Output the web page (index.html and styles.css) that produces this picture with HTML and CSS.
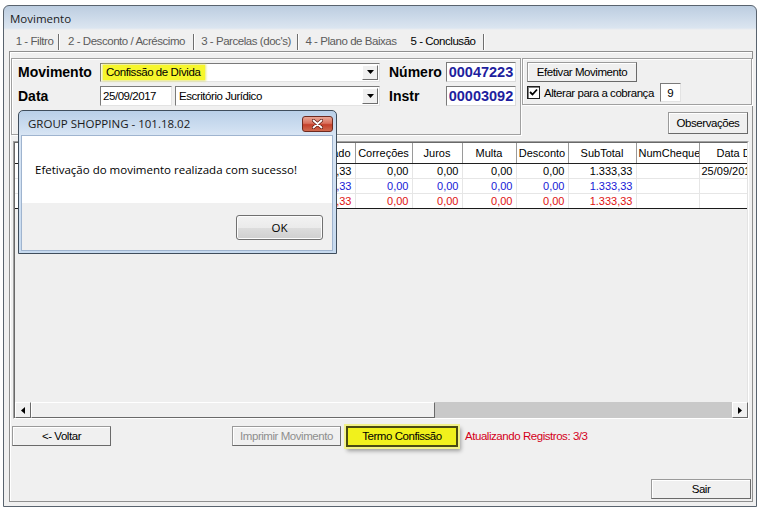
FILE: index.html
```html
<!DOCTYPE html>
<html lang="pt-BR">
<head>
<meta charset="utf-8">
<title>Movimento</title>
<link rel="stylesheet" href="styles.css">
</head>
<body>
<div class="window">
  <div class="titlebar">Movimento</div>
  <div class="tabs">
    <div class="tab t1">1 - Filtro</div><span class="sep"></span>
    <div class="tab t2">2 - Desconto / Acréscimo</div><span class="sep"></span>
    <div class="tab t3">3 - Parcelas (doc's)</div><span class="sep"></span>
    <div class="tab t4">4 - Plano de Baixas</div>
    <div class="tab t5 active">5 - Conclusão</div><span class="sep"></span>
  </div>
  <div class="page">
    <div class="top">
      <div class="group form">
        <span class="lbl">Movimento</span>
        <div class="combo">
          <span class="combo-val"><span class="hl">Confissão de Dívida</span></span>
          <span class="drop"><svg width="7" height="4" viewBox="0 0 7 4"><path d="M0 0h7L3.5 4z" fill="#000"/></svg></span>
        </div>
        <span class="lbl lbl-r">Número</span>
        <div class="numbox">00047223</div>

        <span class="lbl">Data</span>
        <div class="pair">
          <div class="edit date">25/09/2017</div>
          <div class="combo combo-small">
            <span class="combo-val">Escritório Jurídico</span>
            <span class="drop"><svg width="7" height="4" viewBox="0 0 7 4"><path d="M0 0h7L3.5 4z" fill="#000"/></svg></span>
          </div>
        </div>
        <span class="lbl lbl-r">Instr</span>
        <div class="numbox">00003092</div>
      </div>
      <div class="side">
        <div class="group actions">
          <button class="btn btn-efetivar">Efetivar Movimento</button>
          <div class="check-row">
            <span class="checkbox"><svg width="9" height="9" viewBox="0 0 9 9"><path d="M1 4l2.5 2.5L8 1.5" fill="none" stroke="#000" stroke-width="1.8"/></svg></span>
            <span class="check-label">Alterar para a cobrança</span>
            <span class="edit edit-small">9</span>
          </div>
        </div>
        <button class="btn btn-obs">Observações</button>
      </div>
    </div>

    <div class="grid">
      <div class="grid-body">
        <table class="data">
          <colgroup>
            <col class="c-doc"><col class="c-venc"><col class="c-parc"><col class="c-valor"><col class="c-atual">
            <col class="c-corr"><col class="c-juros"><col class="c-multa"><col class="c-desc"><col class="c-sub">
            <col class="c-cheque"><col class="c-data">
          </colgroup>
          <thead>
            <tr>
              <th>Documento</th><th>Vencimento</th><th>Parcela</th><th>Valor</th><th class="r">Atualizado</th>
              <th>Correções</th><th>Juros</th><th>Multa</th><th>Desconto</th><th>SubTotal</th><th>NumCheque</th><th class="l">Data Depósito</th>
            </tr>
          </thead>
          <tbody>
            <tr>
              <td></td><td></td><td></td><td></td><td>1.333,33</td>
              <td>0,00</td><td>0,00</td><td>0,00</td><td>0,00</td><td>1.333,33</td><td></td><td class="l">25/09/2017</td>
            </tr>
            <tr class="blue">
              <td></td><td></td><td></td><td></td><td>1.333,33</td>
              <td>0,00</td><td>0,00</td><td>0,00</td><td>0,00</td><td>1.333,33</td><td></td><td></td>
            </tr>
            <tr class="red">
              <td></td><td></td><td></td><td></td><td>1.333,33</td>
              <td>0,00</td><td>0,00</td><td>0,00</td><td>0,00</td><td>1.333,33</td><td></td><td></td>
            </tr>
          </tbody>
        </table>
      </div>
      <div class="hscroll">
        <span class="sb-btn"><svg width="4" height="7" viewBox="0 0 4 7"><path d="M4 0v7L0 3.5z" fill="#000"/></svg></span>
        <span class="sb-thumb"></span>
        <span class="sb-track"></span>
        <span class="sb-btn"><svg width="4" height="7" viewBox="0 0 4 7"><path d="M0 0v7l4-3.5z" fill="#000"/></svg></span>
      </div>
    </div>

    <div class="bottom-row">
      <button class="btn btn-voltar">&lt;- Voltar</button>
      <button class="btn btn-print" disabled>Imprimir Movimento</button>
      <button class="btn btn-termo">Termo Confissão</button>
      <span class="status">Atualizando Registros: 3/3</span>
    </div>

    <div class="footer">
      <button class="btn btn-sair">Sair</button>
    </div>
  </div>
</div>

<div class="dialog">
  <div class="dlg-title">
    <span>GROUP SHOPPING - 101.18.02</span>
    <span class="dlg-close"><svg width="11" height="10" viewBox="0 0 11 10"><path d="M1.5 1.5l8 7M9.5 1.5l-8 7" stroke="#5a1a10" stroke-width="3.2" stroke-linecap="round"/><path d="M1.5 1.5l8 7M9.5 1.5l-8 7" stroke="#fff" stroke-width="1.8" stroke-linecap="round"/></svg></span>
  </div>
  <div class="dlg-content">
    <div class="dlg-body">Efetivação do movimento realizada com sucesso!</div>
    <div class="dlg-footer"><button class="dlg-ok">OK</button></div>
  </div>
</div>
</body>
</html>
```

FILE: styles.css
```css
* { box-sizing: border-box; }

html, body {
  margin: 0;
  padding: 0;
  background: #fff;
}

body {
  width: 760px;
  height: 510px;
  position: relative;
  overflow: hidden;
  font-family: "Liberation Sans", Arial, sans-serif;
  font-size: 11.5px;
  letter-spacing: -0.45px;
  color: #000;
}

button {
  font: inherit;
  letter-spacing: inherit;
  color: inherit;
  margin: 0;
  padding: 0;
}

/* ---------- main window ---------- */
.window {
  margin: 5px 0 0 3px;
  width: 754px;
  height: 502px;
  border: 1px solid #59636e;
  border-radius: 6px 6px 0 0;
  background: linear-gradient(#bccde0 0, #cad8e8 10px, #dbe5f0 22px, #f0f0f0 24px);
  padding: 0 3px 4px 5px;
  display: flex;
  flex-direction: column;
}

.titlebar {
  height: 24px;
  padding: 5px 0 0 1px;
  font-family: "Open Sans", "Noto Sans", sans-serif;
  font-size: 11.5px;
  letter-spacing: 0;
  line-height: 16px;
  color: #1b1b1b;
}

/* ---------- tabs ---------- */
.tabs {
  height: 21px;
  display: flex;
  align-items: center;
  padding-left: 2px;
}

.tab {
  height: 21px;
  padding-top: 2px;
  line-height: 19px;
  text-align: center;
  color: #5c5c5c;
  white-space: nowrap;
}

.tab.active { color: #000; }

.t1 { width: 47px; }
.t2 { width: 133px; }
.t3 { width: 102px; }
.t4 { width: 104px; }
.t5 { width: 80px; }

.sep {
  width: 2px;
  height: 16px;
  margin-top: 2px;
  border-left: 1px solid #6e6e6e;
  border-right: 1px solid #fff;
}

/* ---------- tab page ---------- */
.page {
  flex: 1;
  border: 1px solid #8f8f8f;
  box-shadow: inset 1px 1px 0 #fff;
  display: flex;
  flex-direction: column;
  padding: 0 0 1px 0;
}

.top {
  display: flex;
  gap: 1px;
  margin: 6px 0 0 1px;
}

.group {
  border: 1px solid #a0a0a0;
  box-shadow: inset 1px 1px 0 #fff, 1px 1px 0 #fff;
}

.form {
  width: 510px;
  height: 77px;
  padding: 3px 3px 0 6px;
  display: grid;
  grid-template-columns: 82px 280px 66px 70px;
  grid-template-rows: 20px 20px;
  row-gap: 4px;
  align-items: center;
}

.lbl {
  font-family: "Liberation Sans", Arial, sans-serif;
  font-weight: bold;
  font-size: 14px;
  letter-spacing: 0;
}

.lbl-r { padding-left: 9px; }

.combo {
  height: 19px;
  display: flex;
  align-items: stretch;
  background: #fff;
  border: 1px solid;
  border-color: #7a7a7a #e3e3e3 #e3e3e3 #7a7a7a;
  padding: 1px;
}

.combo-val {
  flex: 1;
  display: flex;
  align-items: center;
  padding-left: 2px;
  white-space: nowrap;
}

.hl {
  background: #f6f62c;
  padding: 0 5px 0 3px;
  margin-left: -1px;
  line-height: 15px;
  box-shadow: 0 0 2px 1px rgba(228, 228, 90, 0.85);
}

.drop {
  width: 16px;
  display: flex;
  align-items: center;
  justify-content: center;
  background: #f0f0f0;
  border: 1px solid;
  border-color: #fff #6e6e6e #6e6e6e #fff;
}

.pair {
  display: flex;
  gap: 3px;
  height: 20px;
}

.edit {
  background: #fff;
  border: 1px solid;
  border-color: #7a7a7a #e3e3e3 #e3e3e3 #7a7a7a;
  display: flex;
  align-items: center;
}

.date {
  width: 72px;
  padding-left: 2px;
}

.combo-small {
  width: 205px;
  height: 20px;
}

.numbox {
  height: 20px;
  background: #fff;
  border: 1px solid;
  border-color: #7a7a7a #dcdcdc #dcdcdc #7a7a7a;
  font-family: "Liberation Sans", Arial, sans-serif;
  font-weight: bold;
  font-size: 14.5px;
  letter-spacing: 0;
  color: #1e1e9e;
  text-align: center;
  line-height: 18px;
}

.side {
  flex: 1;
  display: flex;
  flex-direction: column;
}

.actions {
  height: 47px;
  padding: 3px 0 0 4px;
}

.btn {
  background: #f0f0f0;
  border: 1px solid;
  border-color: #9a9a9a #6a6a6a #6a6a6a #9a9a9a;
  box-shadow: inset 1px 1px 0 #fff;
  text-align: center;
  white-space: nowrap;
}

.btn-efetivar {
  width: 110px;
  height: 20px;
  display: block;
}

.check-row {
  display: flex;
  align-items: center;
  height: 19px;
  margin-top: 1px;
}

.checkbox {
  width: 13px;
  height: 13px;
  background: #fff;
  border: 1px solid #1f1f1f;
  box-shadow: inset 1px 1px 0 #808080;
  display: flex;
  align-items: center;
  justify-content: center;
}

.check-label {
  margin-left: 4px;
}

.edit-small {
  width: 21px;
  height: 19px;
  margin-left: 6px;
  justify-content: center;
}

.btn-obs {
  align-self: flex-end;
  width: 80px;
  height: 22px;
  margin: 7px 4px 0 0;
}

/* ---------- grid ---------- */
.grid {
  margin: 6px 3px 0 3px;
  height: 278px;
  border: 1px solid #a0a0a0;
  border-right-color: #fff;
  border-bottom-color: #fff;
  display: flex;
  flex-direction: column;
}

.grid-body {
  flex: 1;
  overflow: hidden;
  background: #efefef;
  border: 1px solid #696969;
  border-bottom: 0;
  border-right-color: #e3e3e3;
}

.data {
  width: 784px;
  table-layout: fixed;
  border-collapse: collapse;
  font-family: "Liberation Sans", Arial, sans-serif;
  font-size: 11px;
  letter-spacing: 0;
  background: #fff;
}

.c-doc { width: 74px; }
.c-venc { width: 70px; }
.c-parc { width: 56px; }
.c-valor { width: 70px; }
.c-atual { width: 70px; }
.c-corr { width: 57px; }
.c-juros { width: 50px; }
.c-multa { width: 54px; }
.c-desc { width: 52px; }
.c-sub { width: 68px; }
.c-cheque { width: 63px; }
.c-data { width: 100px; }

.data th {
  height: 20px;
  font-weight: normal;
  text-align: center;
  white-space: nowrap;
  overflow: hidden;
  padding: 0 2px;
  border-right: 1px solid #9a9a9a;
  border-bottom: 1px solid #202020;
}

.data th.r {
  text-align: right;
  padding-right: 4px;
}

.data th.l {
  text-align: left;
  padding-left: 17px;
}

.data td {
  height: 15px;
  padding: 0 3px 0 2px;
  text-align: right;
  white-space: nowrap;
  overflow: hidden;
  border-right: 1px solid #e6e6e6;
  border-bottom: 1px solid #e6e6e6;
  line-height: 14px;
}

.data td.l { text-align: left; }

.data tr.blue td { color: #1717d6; }
.data tr.red td { color: #e01010; }

.data tbody tr:last-child td {
  border-bottom: 1px solid #1a1a1a;
}

.hscroll {
  height: 16px;
  display: flex;
  background: #c9c9c9;
  border-left: 1px solid #696969;
}

.sb-btn {
  width: 16px;
  display: flex;
  align-items: center;
  justify-content: center;
  background: #f0f0f0;
  border: 1px solid;
  border-color: #fff #6a6a6a #6a6a6a #fff;
}

.sb-thumb {
  width: 404px;
  background: #f0f0f0;
  border: 1px solid;
  border-color: #fff #6a6a6a #6a6a6a #fff;
}

.sb-track { flex: 1; }

/* ---------- bottom buttons ---------- */
.bottom-row {
  display: flex;
  align-items: center;
  margin: 7px 0 0 2px;
  height: 20px;
}

.btn-voltar {
  width: 99px;
  height: 20px;
}

.btn-print {
  width: 109px;
  height: 20px;
  margin-left: 121px;
  color: #8e8e8e;
}

.btn-termo {
  width: 112px;
  height: 21px;
  margin-left: 5px;
  background: #f1f11c;
  border: 2px solid #4a4a12;
  box-shadow: 0 0 0 2px #f2f28a, 2px 3px 4px 1px rgba(0, 0, 0, 0.35);
}

.status {
  margin-left: 7px;
  color: #d4001a;
}

.footer {
  margin-top: auto;
  display: flex;
  justify-content: flex-end;
  padding: 0 1px 1px 0;
}

.btn-sair {
  width: 100px;
  height: 20px;
}

/* ---------- message dialog ---------- */
.dialog {
  position: absolute;
  left: 18px;
  top: 110px;
  width: 319px;
  height: 144px;
  border: 1px solid #3f4d5c;
  border-radius: 5px 5px 0 0;
  background: linear-gradient(#b9cfe8 0, #cfdff1 18px, #d8e5f4 24px, #c7daef 100%);
  padding: 0 3px 2px 2px;
  display: flex;
  flex-direction: column;
  font-family: "Open Sans", "Noto Sans", sans-serif;
  font-size: 11.5px;
  letter-spacing: 0;
  color: #000;
}

.dlg-title {
  height: 24px;
  display: flex;
  align-items: center;
  justify-content: space-between;
  padding: 0 0 0 7px;
  color: #1a1a1a;
}

.dlg-close {
  width: 31px;
  height: 16px;
  margin: 2px 0 0 0;
  border: 1px solid #6e2a1f;
  border-radius: 3px;
  background: linear-gradient(#e8a595 0, #d9705c 45%, #c4402b 55%, #d06a4f 100%);
  display: flex;
  align-items: center;
  justify-content: center;
}

.dlg-content {
  flex: 1;
  display: flex;
  flex-direction: column;
  border: 1px solid #9fb4cf;
  background: #f0f0f0;
}

.dlg-body {
  height: 67px;
  background: #fff;
  display: flex;
  align-items: center;
  padding-left: 13px;
}

.dlg-footer {
  flex: 1;
  display: flex;
  justify-content: flex-end;
  padding: 12px 9px 0 0;
}

.dlg-ok {
  width: 87px;
  height: 25px;
  border: 1px solid #707070;
  border-radius: 3px;
  background: linear-gradient(#f2f2f2 0, #ebebeb 50%, #dddddd 51%, #cfcfcf 100%);
  box-shadow: inset 0 0 0 1px #fcfcfc;
  font-family: "Open Sans", "Noto Sans", sans-serif;
  font-size: 11.5px;
  letter-spacing: 0;
}
```
